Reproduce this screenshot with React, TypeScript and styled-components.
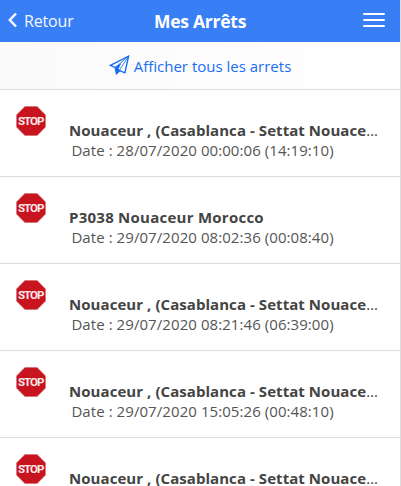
import React from "react";
import styled, { createGlobalStyle } from "styled-components";

const Global = createGlobalStyle`
  * { box-sizing: border-box; }
  body { margin: 0; background: #fff; font-family: "Open Sans", "Noto Sans", sans-serif; overflow: hidden; }
`;

const Screen = styled.div`
  width: 401px;
  height: 486px;
  overflow: hidden;
  border-right: 1px solid #dcdcdc;
  background: #fff;
`;

const Header = styled.header`
  height: 42px;
  display: grid;
  grid-template-columns: 100px 1fr 100px;
  align-items: center;
  background: #387ef5;
  color: #fff;
`;

const Back = styled.button`
  display: flex;
  align-items: center;
  gap: 7px;
  height: 42px;
  padding: 0 0 0 8px;
  border: 0;
  background: none;
  color: #f4f8ff;
  font: 400 16px/42px "Open Sans", sans-serif;
  letter-spacing: -0.15px;
`;

const BackArrow = styled.svg`
  margin-bottom: 2px;
`;

const Title = styled.h1`
  margin: 0;
  text-align: center;
  white-space: nowrap;
  font-size: 17.5px;
  line-height: 42px;
  font-weight: 700;
  letter-spacing: -0.25px;
`;

const MenuButton = styled.button`
  justify-self: end;
  display: flex;
  flex-direction: column;
  gap: 4px;
  width: 22px;
  margin: -2px 15px 0 0;
  padding: 0;
  border: 0;
  background: none;
`;

const Bar = styled.span`
  height: 2px;
  border-radius: 1px;
  background: #fff;
`;

const ShowAll = styled.button`
  display: flex;
  align-items: center;
  justify-content: center;
  gap: 4px;
  width: 100%;
  height: 48px;
  padding: 0;
  border: 0;
  border-bottom: 1px solid #dcdcdc;
  background: linear-gradient(90deg, #fafafa, #fff 95%);
  color: #1a6df0;
  font: 400 15px/48px "Open Sans", sans-serif;
`;

const List = styled.ul`
  margin: 0;
  padding: 0;
  list-style: none;
`;

const Row = styled.li`
  display: flex;
  height: 87px;
  padding: 16px 22px 0 16px;
  border-bottom: 1px solid #dcdcdc;
`;

const Details = styled.div`
  flex: 1;
  min-width: 0;
  margin-left: 23px;
  padding-top: 14px;
  white-space: nowrap;
  line-height: 20px;
`;

const Place = styled.div`
  display: flex;
  color: #444;
  font-size: 15px;
`;

const Name = styled.strong<{ $spacing: number }>`
  font-weight: 700;
  letter-spacing: ${(p) => p.$spacing}px;
`;

const When = styled.div`
  padding-left: 2.4px;
  color: #555;
  font-size: 15px;
  letter-spacing: 0.07px;
`;

const StopSign = () => (
  <svg width="30" height="30" viewBox="0 0 30 30">
    <path d="M9 0.3h12L29.7 9v12L21 29.7H9L0.3 21V9z" fill="#c8141e" stroke="#d9a3a5" strokeWidth="0.6" />
    <text x="2" y="19.2" fill="#fbe9ea" fontFamily="Roboto" fontWeight="700" fontSize="11.5" textLength="26.4" lengthAdjust="spacing">STOP</text>
  </svg>
);

const PlaneIcon = () => (
  <svg width="21" height="21" viewBox="0 0 21 21" fill="none" stroke="currentColor" strokeWidth="1.4">
    <path d="M5.6 12.4 1.4 10.4 19.6 1.2 15.9 17.8 10.6 15.6" />
    <path d="M19.6 1.2 6 12.6M19.6 1.2 10.4 15.4" strokeWidth="0.8" />
    <path d="M5.4 12.2 12.4 8 9.6 13.8 11.8 15.8 7 20z" fill="currentColor" stroke="none" />
  </svg>
);

interface Stop {
  place: string;
  clipped: boolean;
  date: string;
}

const region = "Nouaceur , (Casablanca - Settat Nouace";
const stops: Stop[] = [
  { place: region, clipped: true, date: "28/07/2020 00:00:06 (14:19:10)" },
  { place: "P3038 Nouaceur Morocco", clipped: false, date: "29/07/2020 08:02:36 (00:08:40)" },
  { place: region, clipped: true, date: "29/07/2020 08:21:46 (06:39:00)" },
  { place: region, clipped: true, date: "29/07/2020 15:05:26 (00:48:10)" },
  { place: region, clipped: true, date: "" },
];

export default function App() {
  return (
    <Screen>
      <Global />
      <Header>
        <Back>
          <BackArrow width="9" height="16" viewBox="0 0 9 16" fill="none" stroke="currentColor" strokeWidth="2.5">
            <path d="M8 1.5 1.8 8 8 14.5" />
          </BackArrow>
          Retour
        </Back>
        <Title>Mes Arrêts</Title>
        <MenuButton aria-label="Menu">
          <Bar />
          <Bar />
          <Bar />
        </MenuButton>
      </Header>
      <ShowAll>
        <PlaneIcon />
        <span>Afficher tous les arrets</span>
      </ShowAll>
      <List>
        {stops.map((stop, i) => (
          <Row key={i}>
            <StopSign />
            <Details>
              <Place>
                <Name $spacing={stop.clipped ? 0.06 : 0.25}>{stop.place}</Name>
                {stop.clipped && <span>…</span>}
              </Place>
              {stop.date && <When>Date : {stop.date}</When>}
            </Details>
          </Row>
        ))}
      </List>
    </Screen>
  );
}
